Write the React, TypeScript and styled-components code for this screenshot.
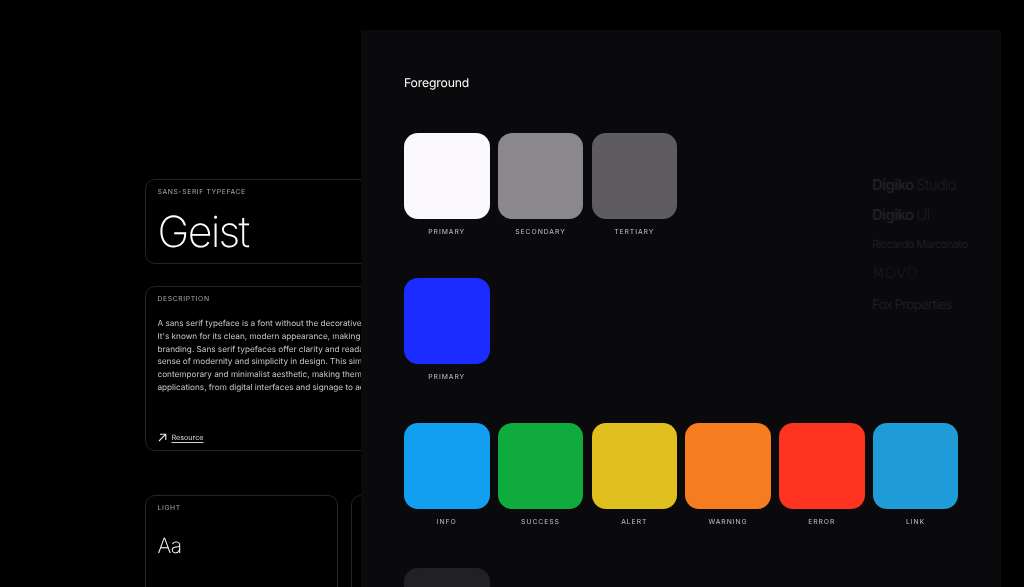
import React from "react";
import styled, { createGlobalStyle } from "styled-components";

const Global = createGlobalStyle`
  html, body { margin: 0; padding: 0; background: #000; height: 587px; overflow: hidden; }
  body { font-family: Inter, "Liberation Sans", sans-serif; text-rendering: geometricPrecision; }
`;

const Stage = styled.div`
  display: grid;
  grid-template-columns: 361px 640px 23px;
  height: 587px;
  overflow: hidden;
  background: #000;
`;

const LeftColumn = styled.div`
  padding: 179px 0 0 145px;
  box-sizing: border-box;
  height: 587px;
  display: flex;
  flex-direction: column;
  filter: grayscale(1);
`;

const Card = styled.section<{ $h: number; $w?: number; $mb?: number }>`
  box-sizing: border-box;
  width: ${(p) => p.$w ?? 375}px;
  height: ${(p) => p.$h}px;
  margin-bottom: ${(p) => p.$mb ?? 0}px;
  flex-shrink: 0;
  border: 1.5px solid #252528;
  border-radius: 10px;
  padding: 7.5px 11.5px;
  display: flex;
  flex-direction: column;
`;

const CardLabel = styled.div`
  font-size: 6.8px;
  line-height: 8px;
  letter-spacing: 0.09em;
  color: #a8a8ab;
  text-transform: uppercase;
`;

const BigTitle = styled.div`
  font-size: 43px;
  line-height: 52px;
  font-weight: 200;
  color: #fff;
  letter-spacing: -0.04em;
  margin-top: 10px;
`;

const Body = styled.p`
  margin: 14.5px 0 0;
  font-size: 8.2px;
  line-height: 12.8px;
  color: #c8c8ca;
  white-space: nowrap;
`;

const ResourceRow = styled.div`
  margin-top: auto;
  margin-bottom: -1px;
  display: flex;
  align-items: center;
  gap: 5px;
  color: #f0f0f2;
`;

const ResourceLink = styled.a`
  font-size: 7.2px;
  line-height: 12px;
  color: #d8d8da;
  text-decoration: underline;
  text-underline-offset: 1.5px;
`;

const WeightRow = styled.div`
  display: flex;
  gap: 13px;
`;

const Sample = styled.div`
  font-size: 21px;
  line-height: 26px;
  font-weight: 200;
  color: #fff;
  letter-spacing: -0.03em;
  margin-top: 22px;
`;

const Panel = styled.main`
  position: relative;
  z-index: 1;
  margin-top: 30px;
  height: 600px;
  background: #0a090c;
  padding: 43px 0 0 43px;
  box-sizing: border-box;
  overflow: hidden;
`;

const TopArea = styled.div`
  display: flex;
`;

const SwatchColumn = styled.div`
  width: 468px;
  flex-shrink: 0;
`;

const PanelTitle = styled.h2`
  margin: 0 0 40px;
  font-size: 12.2px;
  line-height: 20px;
  font-weight: 400;
  color: #fff;
  letter-spacing: -0.012em;
  filter: grayscale(1);
`;

const SwatchRow = styled.div`
  display: flex;
  gap: 8.25px;
  height: 145px;
`;

const SwatchItem = styled.div`
  width: 85.5px;
  display: flex;
  flex-direction: column;
  align-items: center;
`;

const Chip = styled.div<{ $c: string }>`
  width: 100%;
  height: 85.5px;
  border-radius: 14px;
  background: ${(p) => p.$c};
`;

const ChipLabel = styled.div`
  margin-top: 9px;
  font-size: 6.8px;
  line-height: 8px;
  letter-spacing: 0.14em;
  color: #c0c0c3;
  text-transform: uppercase;
  white-space: nowrap;
  filter: grayscale(1);
`;

const LogoColumn = styled.div`
  padding-top: 97px;
  display: flex;
  flex-direction: column;
  color: #1f1e21;
`;

const Logo = styled.div<{ $size: number }>`
  height: 29.6px;
  display: flex;
  align-items: center;
  font-size: ${(p) => p.$size}px;
  letter-spacing: -0.05em;
  font-weight: 300;
  white-space: nowrap;
  gap: 0.18em;
  b { font-weight: 700; }
`;

const WideLogo = styled(Logo)`
  font-family: "DejaVu Sans", sans-serif;
  font-weight: 200;
  letter-spacing: 0.02em;
`;

const PlainLogo = styled(Logo)`
  font-weight: 400;
  letter-spacing: -0.055em;
`;

const LastLogo = styled(PlainLogo)`
  margin-top: 2px;
`;

const Swatch = ({ c, label }: { c: string; label?: string }) => (
  <SwatchItem>
    <Chip $c={c} />
    {label && <ChipLabel>{label}</ChipLabel>}
  </SwatchItem>
);

export default function App() {
  return (
    <Stage>
      <Global />
      <LeftColumn>
        <Card $h={85} $mb={22}>
          <CardLabel>Sans-serif typeface</CardLabel>
          <BigTitle>Geist</BigTitle>
        </Card>
        <Card $h={165} $mb={44}>
          <CardLabel>Description</CardLabel>
          <Body>
            A sans serif typeface is a font without the decorative strokes
            <br />
            It's known for its clean, modern appearance, making it popular
            <br />
            branding. Sans serif typefaces offer clarity and readability
            <br />
            sense of modernity and simplicity in design. This simple style
            <br />
            contemporary and minimalist aesthetic, making them versatile
            <br />
            applications, from digital interfaces and signage to advertising
          </Body>
          <ResourceRow>
            <svg width="9" height="9" viewBox="0 0 9 9" fill="none" stroke="currentColor" strokeWidth="1.1">
              <path d="M1 8 7.8 1.2M2 1.2h5.8V7" />
            </svg>
            <ResourceLink>Resource</ResourceLink>
          </ResourceRow>
        </Card>
        <WeightRow>
          <Card $h={120} $w={193}>
            <CardLabel>Light</CardLabel>
            <Sample>Aa</Sample>
          </Card>
          <Card $h={120} $w={193} />
        </WeightRow>
      </LeftColumn>
      <Panel>
        <TopArea>
          <SwatchColumn>
            <PanelTitle>Foreground</PanelTitle>
            <SwatchRow>
              <Swatch c="#fbf9fd" label="Primary" />
              <Swatch c="#8a888b" label="Secondary" />
              <Swatch c="#5e5c5f" label="Tertiary" />
            </SwatchRow>
            <SwatchRow>
              <Swatch c="#1a2cff" label="Primary" />
            </SwatchRow>
          </SwatchColumn>
          <LogoColumn>
            <Logo $size={15}><b>Digiko</b><span>Studio</span></Logo>
            <Logo $size={15}><b>Digiko</b><span>UI</span></Logo>
            <PlainLogo $size={11.2}>Riccardo Marconato</PlainLogo>
            <WideLogo $size={14.5}>MOVO</WideLogo>
            <LastLogo $size={13.3}><span>Fox</span><span>Properties</span></LastLogo>
          </LogoColumn>
        </TopArea>
        <SwatchRow>
          <Swatch c="#129ff0" label="Info" />
          <Swatch c="#10ab3f" label="Success" />
          <Swatch c="#dfc01e" label="Alert" />
          <Swatch c="#f77b1f" label="Warning" />
          <Swatch c="#fe3320" label="Error" />
          <Swatch c="#1f9bd8" label="Link" />
        </SwatchRow>
        <SwatchRow>
          <Swatch c="#212023" />
        </SwatchRow>
      </Panel>
    </Stage>
  );
}
